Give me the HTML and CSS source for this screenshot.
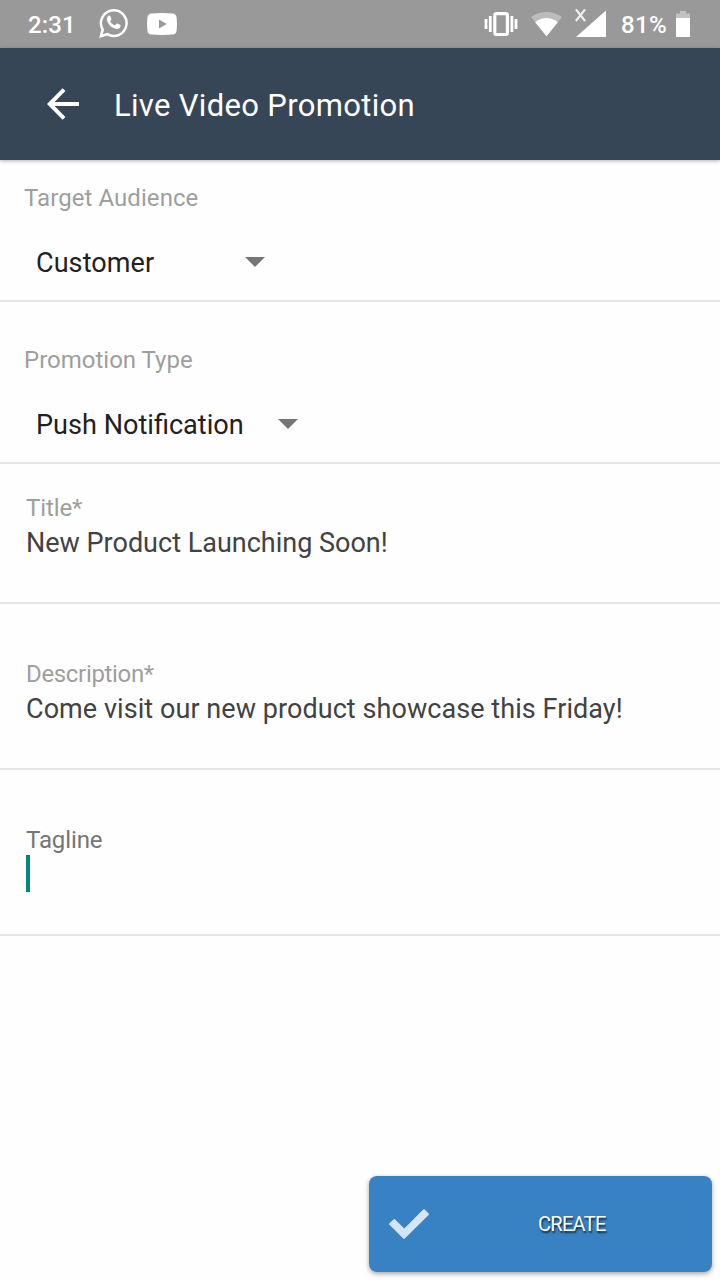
FILE: index.html
```html
<!DOCTYPE html>
<html lang="en">
<head>
<meta charset="utf-8">
<title>Live Video Promotion</title>
<link rel="stylesheet" href="styles.css">
</head>
<body>
<div class="screen">
  <div class="status">
    <span class="clock">2:31</span>
    <svg class="whatsapp" viewBox="0 0 30 32" width="30" height="32">
      <path d="M3 29.100 4.700 22.600A12.800 12.800 0 1 1 9.300 27.200Z" fill="none" stroke="#fff" stroke-width="2.500"/>
      <path d="M10.400 8.800c.7-.5 1.600-.3 2 .5l1 2.400c.2.6.1.9-.3 1.400l-.9 1.100c1.100 2 2.700 3.400 4.800 4.300l1.200-1.500c.4-.5.8-.6 1.300-.4l2.500 1.200c.6.3.7.6.6 1.200-.4 2.100-2.100 3-4 2.900-5-.7-8.800-4.600-9.700-8.900-.1-1.600.5-3.200 1.500-4.200z" fill="#fff"/>
    </svg>
    <svg class="youtube" viewBox="0 0 30 22" width="30" height="22">
      <path fill="#fff" fill-rule="evenodd" d="M4.500.4Q15-.4 25.500.4 29.200.7 29.600 4.500 30.300 11 29.600 17.500 29.200 21.300 25.500 21.600 15 22.400 4.500 21.600.8 21.300.4 17.500-.3 11 .4 4.500.8.7 4.500.4ZM12 6.600V15.400L19.800 11Z"/>
    </svg>
    <svg class="vibrate" viewBox="0 0 34 24" width="34" height="24">
      <rect x="10.800" y="1.700" width="12.600" height="20.800" rx="1.800" fill="none" stroke="#fff" stroke-width="3.200"/>
      <path d="M2 7V17M6.300 4V20M27.900 4V20M32 7V17" stroke="#fff" stroke-width="2.800"/>
    </svg>
    <svg class="wifi" viewBox="0 0 32 25" width="32" height="25">
      <path d="M0 5Q15.500-5 31 5L15.500 24.300Z" fill="#fff" opacity=".35"/>
      <path d="M4.200 10.200Q15.500 2 26.800 10.200L15.500 24.300Z" fill="#fff"/>
    </svg>
    <svg class="signal" viewBox="0 0 32 29" width="32" height="29">
      <path d="M31 1.600V28H1Z" fill="#fff"/>
      <path d="M.9.400 10.100 12M10.100.400.900 12" stroke="#fff" stroke-width="2.200" opacity=".85"/>
    </svg>
    <span class="percent">81%</span>
    <svg class="battery" viewBox="0 0 14 26" width="14" height="26">
      <path d="M0 2.500H4V0H10V2.500H14V7H0Z" fill="#fff" opacity=".4"/>
      <path d="M0 7H14V26H0Z" fill="#fff"/>
    </svg>
  </div>
  <header class="bar">
    <svg class="back" viewBox="0 0 32 32" width="32" height="32">
      <path d="M17 1.700 2.800 16 17 30.300M2.500 16H32" fill="none" stroke="#fff" stroke-width="4"/>
    </svg>
    <h1 class="heading">Live Video Promotion</h1>
  </header>
  <main class="form">
    <section class="picker">
      <div class="label audience">Target Audience</div>
      <div class="choice"><span class="value customer">Customer</span><span class="caret"></span></div>
    </section>
    <section class="picker second">
      <div class="label">Promotion Type</div>
      <div class="choice"><span class="value push">Push Notification</span><span class="caret"></span></div>
    </section>
    <section class="field first">
      <div class="label title">Title*</div>
      <div class="entry">New Product Launching Soon!</div>
    </section>
    <section class="field">
      <div class="label description">Description*</div>
      <div class="entry long">Come visit our new product showcase this Friday!</div>
    </section>
    <section class="field">
      <div class="label active">Tagline</div>
      <div class="cursor"></div>
    </section>
  </main>
  <footer class="footer">
    <button class="create">
      <svg class="check" viewBox="0 0 40 30" width="40" height="30">
        <path d="M4.500 10.500Q5.300 9.700 6.100 10.500L15.300 19.500 34.200.6Q35-.2 35.800.6L39.600 4.400Q40.400 5.200 39.600 6L15.800 29.500Q15 30.300 14.200 29.500L.5 15.800Q-.3 15 .5 14.200Z" fill="#d4e4f3"/>
      </svg>
      <span class="caption">CREATE</span>
    </button>
  </footer>
</div>
</body>
</html>
```
FILE: styles.css
```css
* { box-sizing: border-box; }
body { margin: 0; background: #fefefe; font-family: Roboto, "Liberation Sans", sans-serif; }
svg { display: block; flex: none; }
.screen { width: 720px; height: 1280px; display: flex; flex-direction: column; background: #fefefe; overflow: hidden; }
.status { height: 48px; flex: none; display: flex; align-items: flex-start; background: #999; color: #fff; font-size: 24px; line-height: 28px; font-weight: 500; white-space: nowrap; }
.clock { width: 70px; margin: 11px 0 0 28px; letter-spacing: .1px; }
.whatsapp { margin-top: 7px; }
.youtube { margin: 13px 0 0 19px; }
.vibrate { margin: 12px 0 0 307px; }
.wifi { margin: 12px 0 0 13px; }
.signal { margin: 9px 0 0 12px; }
.percent { width: 55px; margin: 11px 0 0 14px; letter-spacing: .3px; }
.battery { margin-top: 11px; }
.bar { height: 112px; flex: none; display: flex; align-items: center; padding-left: 47px; background: #374656; box-shadow: 0 1px 4px rgba(0, 0, 0, .3); }
.heading { margin: 4px 0 0 35px; color: #fff; font-size: 31px; line-height: 36px; font-weight: 400; letter-spacing: .32px; white-space: nowrap; }
.form { display: flex; flex-direction: column; }
.picker { height: 142px; padding: 24px 24px 0; border-bottom: 2px solid #e5e5e5; }
.second { height: 162px; padding-top: 44px; }
.label { color: #9e9e9e; font-size: 24px; line-height: 28px; white-space: nowrap; }
.audience { letter-spacing: .07px; }
.title { letter-spacing: -.1px; }
.description { letter-spacing: -.33px; }
.choice { display: flex; align-items: flex-start; margin-top: 35px; padding-left: 12px; }
.value, .entry { font-size: 27px; line-height: 32px; white-space: nowrap; }
.value { color: #212121; }
.customer { width: 209px; letter-spacing: .08px; }
.push { width: 242px; font-size: 27.1px; }
.caret { width: 20px; height: 10px; margin-top: 10px; background: #757575; clip-path: polygon(0 0, 100% 0, 50% 100%); }
.field { height: 166px; padding: 56px 26px 0; border-bottom: 2px solid #e5e5e5; }
.first { height: 140px; padding-top: 30px; }
.entry { margin-top: 5px; color: #424242; }
.long { letter-spacing: .06px; }
.active { color: #757575; letter-spacing: -.1px; }
.cursor { width: 4px; height: 37px; margin-top: 1px; background: #00897b; }
.footer { margin-top: auto; padding: 0 8px 8px; display: flex; justify-content: flex-end; }
.create { width: 343px; height: 96px; display: flex; align-items: center; padding: 0 0 0 20px; border: 0; border-radius: 8px; background: #3882c4; box-shadow: 0 2px 5px rgba(0, 0, 0, .35); color: #fff; font: 400 20px/24px Roboto, "Liberation Sans", sans-serif; }
.caption { margin-left: 109px; letter-spacing: -.7px; text-shadow: 1px 2px 2px rgba(0, 0, 0, .7); }
```
